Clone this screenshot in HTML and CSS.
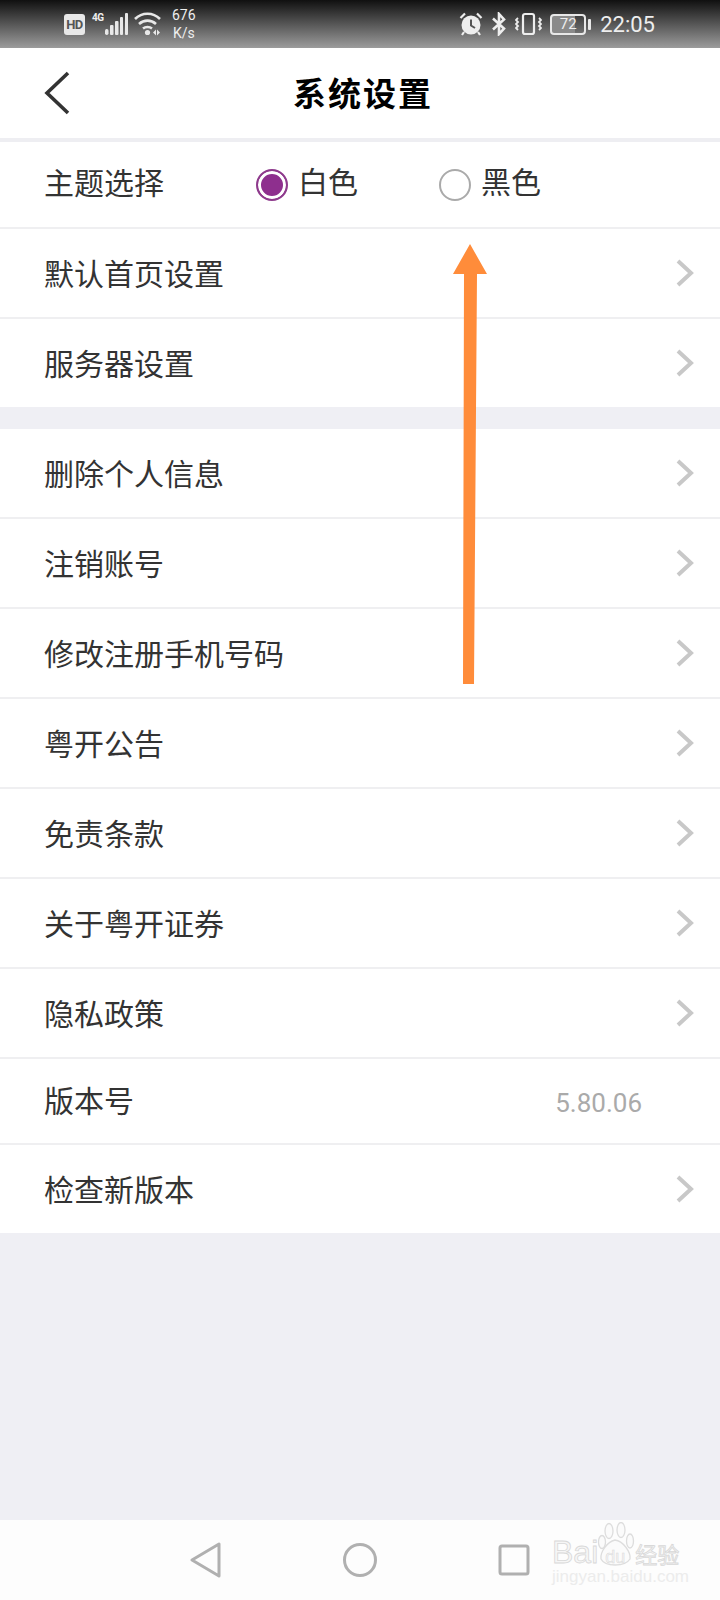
FILE: index.html
```html
<!DOCTYPE html>
<html lang="zh-CN">
<head>
    <meta charset="UTF-8">
    <title>系统设置</title>
    <link rel="stylesheet" href="styles.css">
</head>
<body>
<div class="statusbar">
    <div class="status-left">
        <span class="hd">HD</span>
        <span class="net">4G</span>
        <svg class="signal" width="23" height="24" viewBox="0 0 23 24">
            <rect x="0" y="17" width="3.500" height="6" rx="1.700"/>
            <rect x="5" y="13" width="3.500" height="10" rx="1"/>
            <rect x="10" y="9" width="3.500" height="14" rx="1"/>
            <rect x="15" y="5" width="3" height="18" rx="1"/>
            <rect x="20" y="1" width="3" height="22" rx="1"/>
        </svg>
        <svg class="wifi" width="28" height="24" viewBox="0 0 28 24">
            <path d="M1 7C8 0 19 0 26 7M5 12C10 7.500 17 7.500 22 12M9 16.500C11.500 14.500 15.500 14.500 18 16.500" fill="none" stroke="#e8e8e8" stroke-width="2.600"/>
            <circle cx="13.500" cy="20.500" r="2.600" fill="#e8e8e8"/>
            <path d="M19 20.500l3-3v6zM23 17.500l3 3-3 3z" fill="#e8e8e8"/>
        </svg>
        <div class="speed"><span>676</span><span>K/s</span></div>
    </div>
    <div class="status-right">
        <svg width="24" height="24" viewBox="0 0 24 24">
            <circle cx="12" cy="13" r="9.500" fill="#eee"/>
            <path d="M12 7.500V13.500L16 16" fill="none" stroke="#555" stroke-width="2"/>
            <path d="M1.500 6L6 1.500M18 1.500L22.500 6M5 20L3 23M19 20L21 23" stroke="#eee" stroke-width="2.200" fill="none"/>
        </svg>
        <svg width="16" height="24" viewBox="0 0 16 24">
            <path d="M2 6.500L13 16.500L8 22V2L13 7.500L2 17.500" fill="none" stroke="#eee" stroke-width="2.600"/>
        </svg>
        <svg width="27" height="24" viewBox="0 0 27 24">
            <rect x="8" y="2" width="11" height="20" rx="2" fill="none" stroke="#eee" stroke-width="2.200"/>
            <path d="M3 6l-2 2 2 2-2 2 2 2-2 2 2 2M24 6l2 2-2 2 2 2-2 2 2 2-2 2" fill="none" stroke="#eee" stroke-width="1.800"/>
        </svg>
        <div class="battery"><div class="battery-body"><span>72</span></div><div class="battery-nub"></div></div>
        <span class="clock">22:05</span>
    </div>
</div>

<div class="titlebar">
    <svg class="back" width="26" height="44" viewBox="0 0 26 44">
        <path d="M24 2L3 22L24 42" fill="none" stroke="#333" stroke-width="3.600"/>
    </svg>
    <h1>系统设置</h1>
</div>

<div class="group">
    <div class="row row-theme">
        <span class="label">主题选择</span>
        <div class="radios">
            <div class="radio-item"><span class="radio on"></span><span>白色</span></div>
            <div class="radio-item"><span class="radio"></span><span>黑色</span></div>
        </div>
    </div>
    <div class="row"><span class="label">默认首页设置</span><svg class="chev" width="18" height="28" viewBox="0 0 18 28"><path d="M2 2L15 14L2 26"/></svg></div>
    <div class="row last"><span class="label">服务器设置</span><svg class="chev" width="18" height="28" viewBox="0 0 18 28"><path d="M2 2L15 14L2 26"/></svg></div>
</div>

<div class="group second">
    <div class="row"><span class="label">删除个人信息</span><svg class="chev" width="18" height="28" viewBox="0 0 18 28"><path d="M2 2L15 14L2 26"/></svg></div>
    <div class="row"><span class="label">注销账号</span><svg class="chev" width="18" height="28" viewBox="0 0 18 28"><path d="M2 2L15 14L2 26"/></svg></div>
    <div class="row"><span class="label">修改注册手机号码</span><svg class="chev" width="18" height="28" viewBox="0 0 18 28"><path d="M2 2L15 14L2 26"/></svg></div>
    <div class="row"><span class="label">粤开公告</span><svg class="chev" width="18" height="28" viewBox="0 0 18 28"><path d="M2 2L15 14L2 26"/></svg></div>
    <div class="row"><span class="label">免责条款</span><svg class="chev" width="18" height="28" viewBox="0 0 18 28"><path d="M2 2L15 14L2 26"/></svg></div>
    <div class="row"><span class="label">关于粤开证券</span><svg class="chev" width="18" height="28" viewBox="0 0 18 28"><path d="M2 2L15 14L2 26"/></svg></div>
    <div class="row"><span class="label">隐私政策</span><svg class="chev" width="18" height="28" viewBox="0 0 18 28"><path d="M2 2L15 14L2 26"/></svg></div>
    <div class="row row-version"><span class="label">版本号</span><span class="version">5.80.06</span></div>
    <div class="row last"><span class="label">检查新版本</span><svg class="chev" width="18" height="28" viewBox="0 0 18 28"><path d="M2 2L15 14L2 26"/></svg></div>
</div>

<div class="filler"></div>

<div class="navbar">
    <svg width="32" height="36" viewBox="0 0 32 36"><path d="M29 2V34L2 18Z" fill="none" stroke="#b0b0b0" stroke-width="3" stroke-linejoin="round"/></svg>
    <svg width="36" height="36" viewBox="0 0 36 36"><circle cx="18" cy="18" r="15.500" fill="none" stroke="#b0b0b0" stroke-width="3"/></svg>
    <svg width="32" height="32" viewBox="0 0 32 32"><rect x="2" y="2" width="28" height="28" rx="2" fill="none" stroke="#b0b0b0" stroke-width="3"/></svg>
</div>

<!-- arrow drawn over the list -->
<svg class="arrow" width="36" height="442" viewBox="0 0 36 442">
    <path d="M18 0L35 30H25L22 440H11L12 30H1Z" fill="#ff8c3a"/>
</svg>

<div class="watermark">
    <svg class="paw" width="40" height="46" viewBox="0 0 40 46">
        <g fill="#fbfbfb" stroke="#ddd" stroke-width="1.300">
            <ellipse cx="12" cy="9" rx="4" ry="7.500"/>
            <ellipse cx="24" cy="8" rx="4" ry="7.500"/>
            <ellipse cx="5" cy="20" rx="3.500" ry="6.500"/>
            <ellipse cx="33" cy="19" rx="3.500" ry="7"/>
            <path d="M18 18C10 20 3 30 4 37C8 45 28 45 33 37C34 30 26 19 18 18Z"/>
        </g>
    </svg>
    <div class="wm-line"><span>Bai</span><span class="wm-du">du</span><span class="wm-jy">经验</span></div>
    <div class="wm-url">jingyan.baidu.com</div>
</div>
</body>
</html>
```

FILE: styles.css
```css
* { box-sizing: border-box; }

body {
    margin: 0;
    width: 720px;
    height: 1600px;
    position: relative;
    display: flex;
    flex-direction: column;
    background: #efeff4;
    font-family: "Noto Sans CJK SC", "Noto Sans", sans-serif;
    color: #333;
    overflow: hidden;
}

.statusbar {
    height: 48px;
    display: flex;
    justify-content: space-between;
    align-items: center;
    padding: 0 65px 0 64px;
    background: linear-gradient(to bottom, #101010, #9c9c9c);
    color: #eee;
    font-family: Roboto, sans-serif;
}

.status-left, .status-right {
    display: flex;
    align-items: center;
}

.hd {
    width: 21px;
    height: 21px;
    border-radius: 3px;
    background: #e8e8e8;
    color: #555;
    font-size: 13px;
    font-weight: 700;
    letter-spacing: -0.5px;
    text-align: center;
    line-height: 21px;
}

.net {
    width: 12px;
    margin: -13px 0 0 7px;
    font-size: 10px;
    font-weight: 700;
    letter-spacing: -0.5px;
}

.signal { fill: #e8e8e8; margin-left: 1px; }
.wifi { margin-left: 6px; }

.speed {
    display: flex;
    flex-direction: column;
    align-items: center;
    margin-left: 10px;
    font-size: 14px;
    line-height: 18px;
}

.status-right svg { margin-right: 8px; }

.battery {
    display: flex;
    align-items: center;
    margin-right: 9px;
}

.battery-body {
    width: 36px;
    height: 21px;
    border: 2px solid #e8e8e8;
    border-radius: 4px;
    background: linear-gradient(to right, #8a8a8a 72%, transparent 72%);
    font-size: 15px;
    line-height: 17px;
    text-align: center;
}

.battery-nub {
    width: 3px;
    height: 11px;
    margin-left: 2px;
    border-radius: 1px;
    background: #e8e8e8;
}

.clock { font-size: 22px; }

.titlebar {
    height: 94px;
    display: flex;
    align-items: center;
    justify-content: center;
    position: relative;
    padding: 0 0 2px 6px;
    background: #fff;
    border-bottom: 4px solid #eeeef2;
}

/* back button sits over the centred title */
.back {
    position: absolute;
    left: 44px;
    top: 23px;
}

h1 {
    margin: 0;
    font-size: 33px;
    font-weight: 700;
    letter-spacing: 2px;
    color: #000;
}

.group { background: #fff; }
.group.second { margin-top: 22px; }

.row {
    height: 90px;
    display: flex;
    align-items: center;
    justify-content: space-between;
    padding: 0 26px 0 44px;
    border-bottom: 2px solid #efeff1;
    font-size: 30px;
}

.row.last {
    height: 88px;
    border-bottom: none;
}

.row-theme {
    height: 87px;
    justify-content: flex-start;
    padding-bottom: 6px;
}

.row-version { height: 86px; }

.label {
    margin-top: -2px;
    color: #333;
}

.row-version .label { margin-top: -4px; }

.chev {
    fill: none;
    stroke: #c8c8c8;
    stroke-width: 4;
}

.radios {
    display: flex;
    margin: -4px 0 0 92px;
}

.radio-item {
    display: flex;
    align-items: center;
    gap: 10px;
    width: 183px;
}

.radio {
    width: 32px;
    height: 32px;
    margin-top: 10px;
    border: 2px solid #aaa;
    border-radius: 50%;
}

.radio.on {
    border-color: #8e3a8c;
    background: #8e2f8e;
    box-shadow: inset 0 0 0 3px #fff;
}

.version {
    margin: 4px 52px 0 0;
    font-family: Roboto, sans-serif;
    font-size: 26px;
    color: #aaa;
}

.filler { flex: 1; }

.navbar {
    height: 80px;
    display: flex;
    align-items: center;
    padding-left: 190px;
    gap: 120px;
    background: #fdfdfd;
}

.arrow {
    position: absolute;
    left: 452px;
    top: 244px;
}

.watermark {
    position: absolute;
    left: 552px;
    top: 1522px;
    width: 130px;
    height: 64px;
    font-family: "Liberation Sans", "Noto Sans CJK SC", sans-serif;
    color: #f6f6f6;
    -webkit-text-stroke: 0.8px #d8d8d8;
}

.paw {
    position: absolute;
    left: 45px;
    top: 0;
}

.wm-line {
    position: absolute;
    left: 0;
    top: 12px;
    display: flex;
    align-items: baseline;
    font-size: 32px;
    line-height: 36px;
}

.wm-du {
    width: 37px;
    padding-left: 7px;
    font-size: 18px;
    -webkit-text-stroke: 0.5px #d8d8d8;
}

.wm-jy { font-size: 22px; }

.wm-url {
    position: absolute;
    left: 0;
    top: 45px;
    font-size: 17px;
    line-height: 20px;
    color: #ececec;
    -webkit-text-stroke: 0;
}
```
